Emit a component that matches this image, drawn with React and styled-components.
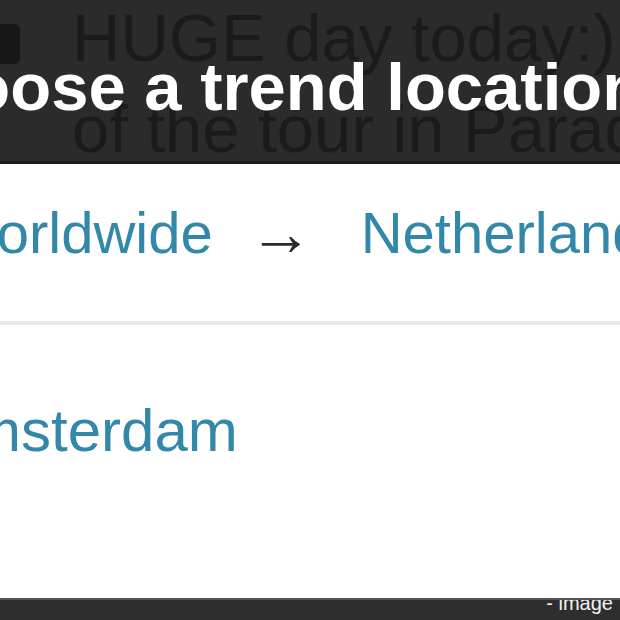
import React from "react";
import styled, { createGlobalStyle } from "styled-components";

const Global = createGlobalStyle`
  html, body { margin: 0; padding: 0; background: #fff; }
  body { width: 620px; height: 620px; overflow: hidden; font-family: "Liberation Sans", Arial, sans-serif; }
`;

const Page = styled.div`
  width: 620px;
  height: 620px;
  display: flex;
  flex-direction: column;
  overflow: hidden;
  background: #fff;
`;

const Header = styled.div`
  position: relative;
  height: 161px;
  flex: none;
  background: #2b2b2b;
  border-bottom: 3px solid #1c1c1c;
  overflow: hidden;
`;

const Tweet = styled.div`
  padding: 0 0 0 72px;
  margin-top: -8px;
  font-size: 67px;
  line-height: 91px;
  color: #1b1b1b;
  white-space: nowrap;
`;

const Avatar = styled.div`
  position: absolute;
  left: -10px;
  top: 24px;
  width: 30px;
  height: 40px;
  border-radius: 6px;
  background: #171717;
`;

const Title = styled.h1`
  position: absolute;
  left: -120px;
  top: 51px;
  margin: 0;
  font-size: 67px;
  line-height: 72px;
  font-weight: bold;
  color: #fff;
  white-space: nowrap;
`;

const Crumbs = styled.div`
  height: 161px;
  flex: none;
  display: flex;
  align-items: center;
  margin-left: -57px;
  padding-bottom: 20px;
  border-bottom: 4px solid #e6e6e6;
  font-size: 58px;
  white-space: nowrap;
  box-sizing: border-box;
`;

const Place = styled.span`
  color: #3388aa;
`;

const Arrow = styled.span`
  color: #2a2a2a;
  font-size: 64px;
  font-weight: bold;
  margin: 0 48px 0 36px;
`;

const List = styled.div`
  flex: 1;
  padding-top: 74px;
  margin-left: -69px;
`;

const Item = styled.div`
  font-size: 60px;
  line-height: 64px;
  color: #3388aa;
  white-space: nowrap;
`;

const Footer = styled.div`
  height: 20px;
  flex: none;
  background: #2e2e2e;
  border-top: 2px solid #555;
  display: flex;
  justify-content: flex-end;
  align-items: flex-start;
  overflow: hidden;
`;

const Caption = styled.span`
  font-size: 20px;
  line-height: 20px;
  margin-top: -7px;
  padding-right: 7px;
  color: #f2f2f2;
`;

export default function App() {
  return (
    <Page>
      <Global />
      <Header>
        <Avatar />
        <Tweet>
          HUGE day today:) the final leg
          <br />
          of the tour in Paradiso
        </Tweet>
        <Title>Choose a trend location</Title>
      </Header>
      <Crumbs>
        <Place>Worldwide</Place>
        <Arrow>→</Arrow>
        <Place>Netherlands</Place>
      </Crumbs>
      <List>
        <Item>Amsterdam</Item>
      </List>
      <Footer>
        <Caption>- image</Caption>
      </Footer>
    </Page>
  );
}
